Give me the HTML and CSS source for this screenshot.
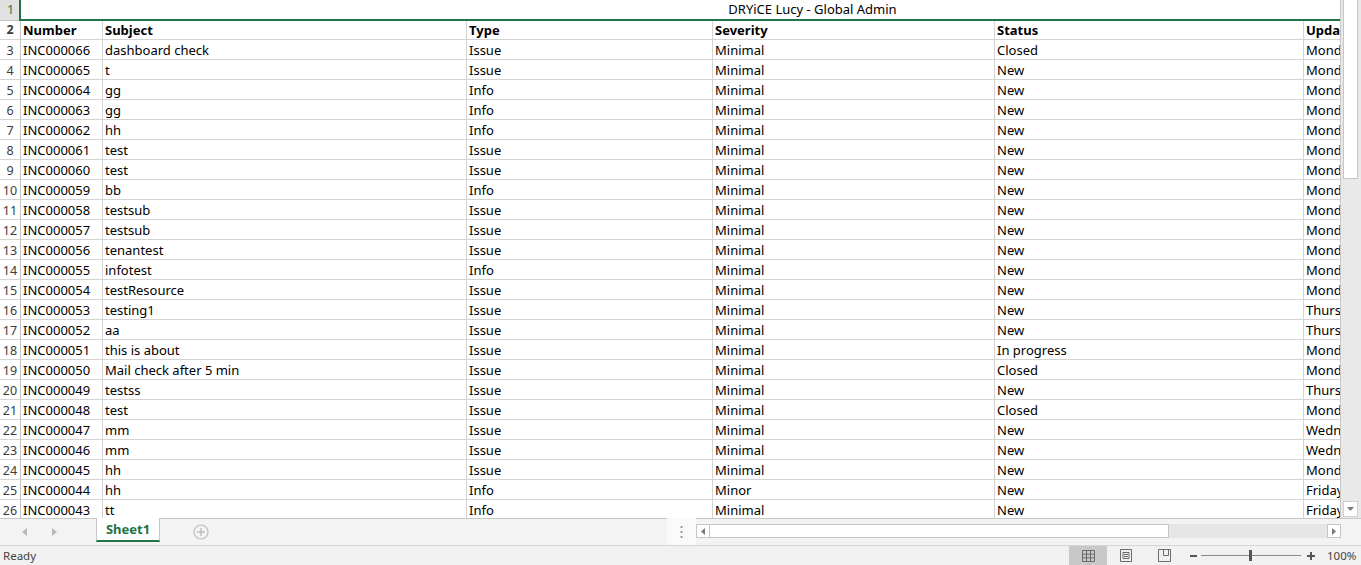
FILE: index.html
```html
<!DOCTYPE html>
<html lang="en">
<head>
  <meta charset="UTF-8">
  <meta name="viewport" content="width=device-width, initial-scale=1.0">
  <title>DRYiCE Lucy - Global Admin</title>
  <link rel="stylesheet" href="styles.css">
</head>
<body>
  <div class="app">
    <div class="workarea">
      <div class="grid">
        <div class="row row-title">
          <div class="rh rh-sel">1</div>
          <div class="title-cell">DRYiCE Lucy - Global Admin</div>
        </div>
        <div class="row row-head">
          <div class="rh">2</div>
          <div class="c">Number</div><div class="c">Subject</div><div class="c">Type</div>
          <div class="c">Severity</div><div class="c">Status</div><div class="c">Updated</div>
        </div>
        <div class="row"><div class="rh">3</div><div class="c">INC000066</div><div class="c">dashboard check</div><div class="c">Issue</div><div class="c">Minimal</div><div class="c">Closed</div><div class="c">Monday</div></div>
        <div class="row"><div class="rh">4</div><div class="c">INC000065</div><div class="c">t</div><div class="c">Issue</div><div class="c">Minimal</div><div class="c">New</div><div class="c">Monday</div></div>
        <div class="row"><div class="rh">5</div><div class="c">INC000064</div><div class="c">gg</div><div class="c">Info</div><div class="c">Minimal</div><div class="c">New</div><div class="c">Monday</div></div>
        <div class="row"><div class="rh">6</div><div class="c">INC000063</div><div class="c">gg</div><div class="c">Info</div><div class="c">Minimal</div><div class="c">New</div><div class="c">Monday</div></div>
        <div class="row"><div class="rh">7</div><div class="c">INC000062</div><div class="c">hh</div><div class="c">Info</div><div class="c">Minimal</div><div class="c">New</div><div class="c">Monday</div></div>
        <div class="row"><div class="rh">8</div><div class="c">INC000061</div><div class="c">test</div><div class="c">Issue</div><div class="c">Minimal</div><div class="c">New</div><div class="c">Monday</div></div>
        <div class="row"><div class="rh">9</div><div class="c">INC000060</div><div class="c">test</div><div class="c">Issue</div><div class="c">Minimal</div><div class="c">New</div><div class="c">Monday</div></div>
        <div class="row"><div class="rh">10</div><div class="c">INC000059</div><div class="c">bb</div><div class="c">Info</div><div class="c">Minimal</div><div class="c">New</div><div class="c">Monday</div></div>
        <div class="row"><div class="rh">11</div><div class="c">INC000058</div><div class="c">testsub</div><div class="c">Issue</div><div class="c">Minimal</div><div class="c">New</div><div class="c">Monday</div></div>
        <div class="row"><div class="rh">12</div><div class="c">INC000057</div><div class="c">testsub</div><div class="c">Issue</div><div class="c">Minimal</div><div class="c">New</div><div class="c">Monday</div></div>
        <div class="row"><div class="rh">13</div><div class="c">INC000056</div><div class="c">tenantest</div><div class="c">Issue</div><div class="c">Minimal</div><div class="c">New</div><div class="c">Monday</div></div>
        <div class="row"><div class="rh">14</div><div class="c">INC000055</div><div class="c">infotest</div><div class="c">Info</div><div class="c">Minimal</div><div class="c">New</div><div class="c">Monday</div></div>
        <div class="row"><div class="rh">15</div><div class="c">INC000054</div><div class="c">testResource</div><div class="c">Issue</div><div class="c">Minimal</div><div class="c">New</div><div class="c">Monday</div></div>
        <div class="row"><div class="rh">16</div><div class="c">INC000053</div><div class="c">testing1</div><div class="c">Issue</div><div class="c">Minimal</div><div class="c">New</div><div class="c">Thursday</div></div>
        <div class="row"><div class="rh">17</div><div class="c">INC000052</div><div class="c">aa</div><div class="c">Issue</div><div class="c">Minimal</div><div class="c">New</div><div class="c">Thursday</div></div>
        <div class="row"><div class="rh">18</div><div class="c">INC000051</div><div class="c">this is about</div><div class="c">Issue</div><div class="c">Minimal</div><div class="c">In progress</div><div class="c">Monday</div></div>
        <div class="row"><div class="rh">19</div><div class="c">INC000050</div><div class="c">Mail check after 5 min</div><div class="c">Issue</div><div class="c">Minimal</div><div class="c">Closed</div><div class="c">Monday</div></div>
        <div class="row"><div class="rh">20</div><div class="c">INC000049</div><div class="c">testss</div><div class="c">Issue</div><div class="c">Minimal</div><div class="c">New</div><div class="c">Thursday</div></div>
        <div class="row"><div class="rh">21</div><div class="c">INC000048</div><div class="c">test</div><div class="c">Issue</div><div class="c">Minimal</div><div class="c">Closed</div><div class="c">Monday</div></div>
        <div class="row"><div class="rh">22</div><div class="c">INC000047</div><div class="c">mm</div><div class="c">Issue</div><div class="c">Minimal</div><div class="c">New</div><div class="c">Wednesday</div></div>
        <div class="row"><div class="rh">23</div><div class="c">INC000046</div><div class="c">mm</div><div class="c">Issue</div><div class="c">Minimal</div><div class="c">New</div><div class="c">Wednesday</div></div>
        <div class="row"><div class="rh">24</div><div class="c">INC000045</div><div class="c">hh</div><div class="c">Issue</div><div class="c">Minimal</div><div class="c">New</div><div class="c">Monday</div></div>
        <div class="row"><div class="rh">25</div><div class="c">INC000044</div><div class="c">hh</div><div class="c">Info</div><div class="c">Minor</div><div class="c">New</div><div class="c">Friday</div></div>
        <div class="row"><div class="rh">26</div><div class="c">INC000043</div><div class="c">tt</div><div class="c">Info</div><div class="c">Minimal</div><div class="c">New</div><div class="c">Friday</div></div>
      </div>
      <!-- vertical scrollbar -->
      <div class="vscroll">
        <div class="vthumb"></div>
        <div class="vdown">
          <svg width="7" height="4" viewBox="0 0 7 4"><path d="M0 0h7L3.5 4z" fill="#7a7a7a"/></svg>
        </div>
      </div>
    </div>

    <div class="tabbar">
      <div class="tabnav">
        <svg width="5" height="8" viewBox="0 0 5 8"><path d="M5 0v8L0 4z" fill="#b9b9b9"/></svg>
        <svg width="5" height="8" viewBox="0 0 5 8"><path d="M0 0v8l5-4z" fill="#b9b9b9"/></svg>
      </div>
      <div class="tab">Sheet1</div>
      <div class="addsheet">
        <svg width="16" height="16" viewBox="0 0 16 16">
          <circle cx="8" cy="8" r="7" fill="none" stroke="#bdbdbd" stroke-width="1.2"/>
          <path d="M8 4v8M4 8h8" stroke="#bdbdbd" stroke-width="1.4"/>
        </svg>
      </div>
      <div class="tabspace"></div>
      <div class="hsplit">
        <svg width="3" height="12" viewBox="0 0 3 12"><rect x="0.5" y="0" width="2" height="2" fill="#9a9a9a"/><rect x="0.5" y="5" width="2" height="2" fill="#9a9a9a"/><rect x="0.5" y="10" width="2" height="2" fill="#9a9a9a"/></svg>
      </div>
      <div class="hscroll">
        <div class="harrow">
          <svg width="4" height="7" viewBox="0 0 4 7"><path d="M4 0v7L0 3.5z" fill="#7a7a7a"/></svg>
        </div>
        <div class="hthumb"></div>
        <div class="htrack"></div>
        <div class="harrow">
          <svg width="4" height="7" viewBox="0 0 4 7"><path d="M0 0v7l4-3.5z" fill="#7a7a7a"/></svg>
        </div>
      </div>
      <div class="corner"></div>
    </div>

    <div class="statusbar">
      <span class="ready">Ready</span>
      <div class="views">
        <div class="view view-on">
          <svg width="13" height="12" viewBox="0 0 13 12"><path d="M0.5 0.5h12v11h-12zM0.5 4.2h12M0.5 7.8h12M4.5 0.5v11M8.5 0.5v11" fill="none" stroke="#6b6b6b"/></svg>
        </div>
        <div class="view">
          <svg width="12" height="13" viewBox="0 0 12 13"><path d="M0.5 0.5h11v12h-11z" fill="none" stroke="#6b6b6b"/><path d="M3 3.5h6v6H3z" fill="none" stroke="#6b6b6b"/><path d="M4 5.5h4M4 7.5h4" stroke="#6b6b6b"/></svg>
        </div>
        <div class="view">
          <svg width="13" height="13" viewBox="0 0 13 13"><path d="M0.5 0.5h12v12h-12z" fill="none" stroke="#6b6b6b"/><path d="M5.5 0.5v6h5v-6" fill="none" stroke="#6b6b6b"/></svg>
        </div>
      </div>
      <div class="zoom">
        <span class="zminus"></span>
        <div class="zline"><span class="zknob"></span></div>
        <span class="zplus"></span>
        <span class="zpct">100%</span>
      </div>
    </div>
  </div>
</body>
</html>
```

FILE: styles.css
```css
body {
  margin: 0;
  font-family: "Noto Sans", "Open Sans", sans-serif;
  background: #fff;
  color: #000;
  overflow: hidden;
}
.app {
  width: 1361px;
  height: 565px;
  display: flex;
  flex-direction: column;
}

/* sheet + vertical scrollbar */
.workarea {
  display: flex;
  height: 518px;
}
.grid {
  width: 1340px;
  overflow: hidden;
  flex: none;
}
.row {
  display: grid;
  grid-template-columns: 21px 82px 364px 246px 282px 309px 300px;
  height: 20px;
  font-size: 13px;
  line-height: 19px;
}
.row > div {
  box-sizing: border-box;
  border-right: 1px solid #d4d4d4;
  border-bottom: 1px solid #d4d4d4;
  padding: 1px 0 0 2px;
  white-space: nowrap;
  overflow: hidden;
}
.row-head {
  font-weight: bold;
  height: 19px;
  line-height: 18px;
}
.row-head > div {
  padding-top: 0;
}
.row .rh {
  padding: 1px 0 0;
  text-align: center;
  color: #3c3c3c;
  font-size: 12.5px;
  border-right-color: #c4c4c4;
}
.row-head .rh {
  padding-top: 0;
}
.row-title {
  height: 21px;
}
.row-title .rh-sel {
  padding-top: 0;
  background: #e1e1e1;
  color: #217346;
  border-right: none;
  border-bottom-color: #c4c4c4;
}
.row-title .title-cell {
  grid-column: 2 / -1;
  margin-left: -2px;
  border-left: 2px solid #217346;
  border-bottom: 2px solid #217346;
  border-right: none;
  text-align: center;
  padding: 0;
  line-height: 19px;
}

.vscroll {
  flex: 1;
  border-left: 1px solid #c6c6c6;
  background: #e9e9e9;
  position: relative;
}
.vthumb {
  margin: 0 3px 0 2px;
  height: 178px;
  background: #fff;
  border: 1px solid #c6c6c6;
  border-top: none;
}
.vdown {
  position: absolute;
  left: 2px;
  right: 3px;
  bottom: 1px;
  height: 14px;
  background: #fff;
  border: 1px solid #d0d0d0;
  display: flex;
  align-items: center;
  justify-content: center;
}

/* sheet tabs + horizontal scrollbar */
.tabbar {
  height: 27px;
  box-sizing: border-box;
  background: #f3f3f3;
  border-top: 1px solid #c6c6c6;
  display: flex;
}
.tabnav {
  width: 96px;
  display: flex;
  align-items: center;
  gap: 25px;
  padding-left: 22px;
  box-sizing: border-box;
}
.tab {
  margin-top: -1px;
  width: 64px;
  height: 24px;
  box-sizing: border-box;
  background: #fff;
  border-left: 1px solid #c6c6c6;
  border-right: 1px solid #c6c6c6;
  border-bottom: 2px solid #217346;
  color: #217346;
  font-weight: bold;
  font-size: 13px;
  text-align: center;
  line-height: 22px;
}
.addsheet {
  width: 64px;
  display: flex;
  align-items: center;
  justify-content: center;
  padding-left: 18px;
  box-sizing: border-box;
}
.tabspace {
  width: 443px;
}
.hsplit {
  width: 29px;
  background: #fafafa;
  display: flex;
  align-items: center;
  justify-content: center;
  margin-top: -1px;
}
.hscroll {
  width: 645px;
  display: flex;
  align-items: center;
  padding-bottom: 2px;
  box-sizing: border-box;
}
.harrow {
  width: 14px;
  height: 14px;
  background: #fff;
  border: 1px solid #c6c6c6;
  box-sizing: border-box;
  display: flex;
  align-items: center;
  justify-content: center;
}
.hthumb {
  width: 459px;
  height: 14px;
  background: #fff;
  border: 1px solid #c6c6c6;
  border-left: none;
  box-sizing: border-box;
}
.htrack {
  flex: 1;
  height: 14px;
  background: #e6e6e6;
}
.corner {
  flex: 1;
}

/* status bar */
.statusbar {
  height: 20px;
  box-sizing: border-box;
  border-top: 1px solid #d6d6d6;
  background: #f1f1f1;
  display: flex;
  align-items: center;
  font-size: 11.5px;
  color: #444;
}
.ready {
  padding-left: 3px;
  width: 1066px;
}
.views {
  display: flex;
  height: 100%;
}
.view {
  width: 38px;
  display: flex;
  align-items: center;
  justify-content: center;
}
.view-on {
  background: #c8c8c8;
}
.zoom {
  display: flex;
  align-items: center;
  margin-left: 7px;
}
.zminus {
  width: 7px;
  height: 2px;
  background: #555;
}
.zline {
  width: 100px;
  height: 1px;
  background: #8a8a8a;
  margin: 0 6px 0 4px;
  position: relative;
}
.zknob {
  position: absolute;
  left: 48px;
  top: -5px;
  width: 3px;
  height: 11px;
  background: #555;
}
.zplus {
  width: 8px;
  height: 8px;
  background:
    linear-gradient(#555, #555) center / 8px 2px no-repeat,
    linear-gradient(#555, #555) center / 2px 8px no-repeat;
}
.zpct {
  margin-left: 12px;
  font-size: 11.5px;
}
```
